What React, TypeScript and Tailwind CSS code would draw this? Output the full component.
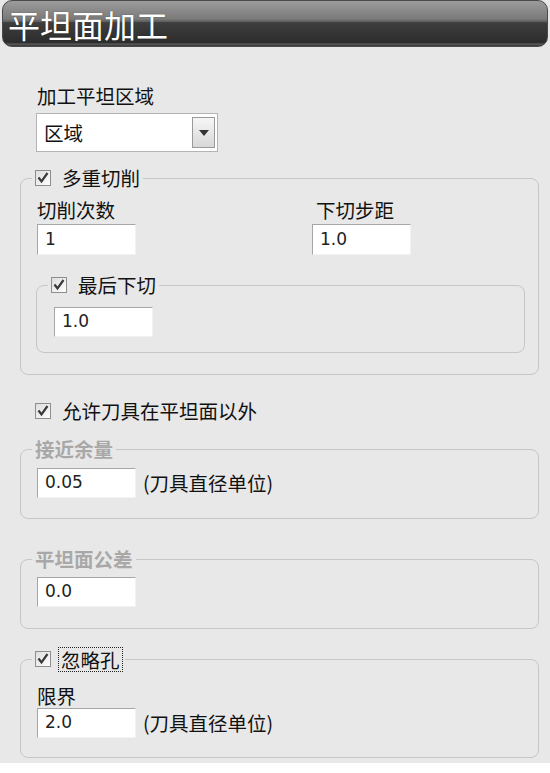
import React from "react";

const CJK = "font-['Noto_Sans_CJK_SC','Noto_Sans',sans-serif]";
const NUM = "font-['DejaVu_Sans','Noto_Sans_CJK_SC',sans-serif]";

function Check() {
  return (
    <svg width="16" height="16" viewBox="0 0 16 16" className="shrink-0">
      <defs>
        <linearGradient id="cbg" x1="0" y1="0" x2="1" y2="1">
          <stop offset="0" stopColor="#dcdcdc" />
          <stop offset="1" stopColor="#ffffff" />
        </linearGradient>
      </defs>
      <rect x="0.5" y="0.5" width="15" height="15" fill="url(#cbg)" stroke="#8e8e8e" />
      <path d="M3.5 7.5 L6.5 11.5 L12.5 3" fill="none" stroke="#3a3a3a" strokeWidth="2.2" />
    </svg>
  );
}

function Field({ value, w = "w-[99px]", h = "h-[30px]" }: { value: string; w?: string; h?: string }) {
  return (
    <div
      className={`${w} ${h} bg-white border border-t-[#a6a6a6] border-l-[#a6a6a6] border-r-[#f2f2f2] border-b-[#f2f2f2] pl-[7px] flex items-center text-[17px] text-[#222] ${NUM}`}
    >
      {value}
    </div>
  );
}

function Legend({ children }: { children: React.ReactNode }) {
  return (
    <legend className="ml-[11px] px-[3px] h-[24px] leading-[24px]">
      <span className="flex items-center h-[24px]">{children}</span>
    </legend>
  );
}

export default function App() {
  return (
    <div className={`w-[550px] h-[773px] bg-white ${CJK} text-[19.5px] text-[#111]`}>
      <div className="h-[763px] bg-[#e8e8e8] pt-0">
        <div className="mx-[2px] h-[47px] rounded-[10px] border border-[#4a4a4a] bg-[linear-gradient(to_bottom,#9c9c9c_0%,#7a7a7a_40%,#5e5e5e_46%,#3e3e3e_48%,#2c2c2c_92%,#5a5a5a_96%,#333_100%)] flex items-center pl-[5px]">
          <span className="text-[32px] leading-none text-white [text-shadow:0_0_1px_rgba(0,0,0,0.6)]">平坦面加工</span>
        </div>

        <div className="pl-[20px] pr-[11px]">
          <div className="mt-[37px] pl-[17px] h-[24px] leading-[24px]">加工平坦区域</div>
          <div className="mt-[5px] ml-[16px] w-[182px] h-[39px] bg-white border border-[#b4b4b4] flex items-center justify-between pl-[7px] pr-[2px]">
            <span className="leading-none">区域</span>
            <div className="w-[23px] h-[31px] border border-[#9a9a9a] bg-[linear-gradient(to_bottom,#f6f6f6,#d8d8d8)] flex items-center justify-center">
              <svg width="10" height="6" viewBox="0 0 10 6">
                <path d="M0 0 L10 0 L5 6 Z" fill="#333" />
              </svg>
            </div>
          </div>

          <fieldset className="mt-[14px] border border-[#c6c6c6] rounded-[8px] p-0 m-0">
            <Legend>
              <Check />
              <span className="ml-[11px]">多重切削</span>
            </Legend>
            <div className="pt-[8px] pl-[16px] pr-[13px] pb-[21px]">
              <div className="grid grid-cols-[275px_1fr]">
                <div>
                  <div className="h-[24px] leading-[24px]">切削次数</div>
                  <div className="mt-[2px]">
                    <Field value="1" h="h-[31px]" />
                  </div>
                </div>
                <div>
                  <div className="h-[24px] leading-[24px] ml-[4px]">下切步距</div>
                  <div className="mt-[2px]">
                    <Field value="1.0" h="h-[31px]" />
                  </div>
                </div>
              </div>
              <fieldset className="mt-[18px] -ml-[1px] border border-[#c6c6c6] rounded-[8px] p-0 m-0">
                <Legend>
                  <Check />
                  <span className="ml-[11px]">最后下切</span>
                </Legend>
                <div className="pt-[10px] pl-[17px] pb-[15px]">
                  <Field value="1.0" />
                </div>
              </fieldset>
            </div>
          </fieldset>

          <div className="mt-[24px] ml-[15px] h-[24px] flex items-center">
            <Check />
            <span className="ml-[11px] leading-[24px]">允许刀具在平坦面以外</span>
          </div>

          <fieldset className="mt-[14px] border border-[#c6c6c6] rounded-[8px] p-0 m-0">
            <Legend>
              <span className="font-bold text-[#a8a8a8]">接近余量</span>
            </Legend>
            <div className="pt-[7px] pl-[16px] pb-[20px] flex items-center">
              <Field value="0.05" />
              <span className="ml-[7px] leading-[24px]">(刀具直径单位)</span>
            </div>
          </fieldset>

          <fieldset className="mt-[28px] border border-[#c6c6c6] rounded-[8px] p-0 m-0">
            <Legend>
              <span className="font-bold text-[#a8a8a8]">平坦面公差</span>
            </Legend>
            <div className="pt-[6px] pl-[16px] pb-[21px]">
              <Field value="0.0" />
            </div>
          </fieldset>

          <fieldset className="mt-[18px] border border-[#c6c6c6] rounded-[8px] p-0 m-0">
            <Legend>
              <Check />
              <span className="ml-[8px] px-[2px] leading-[23px] outline outline-1 outline-dotted outline-[#222]">忽略孔</span>
            </Legend>
            <div className="pt-[13px] pl-[16px] pb-[19px]">
              <div className="h-[24px] leading-[24px]">限界</div>
              <div className="flex items-center">
                <Field value="2.0" />
                <span className="ml-[7px] leading-[24px]">(刀具直径单位)</span>
              </div>
            </div>
          </fieldset>
        </div>
      </div>
    </div>
  );
}
